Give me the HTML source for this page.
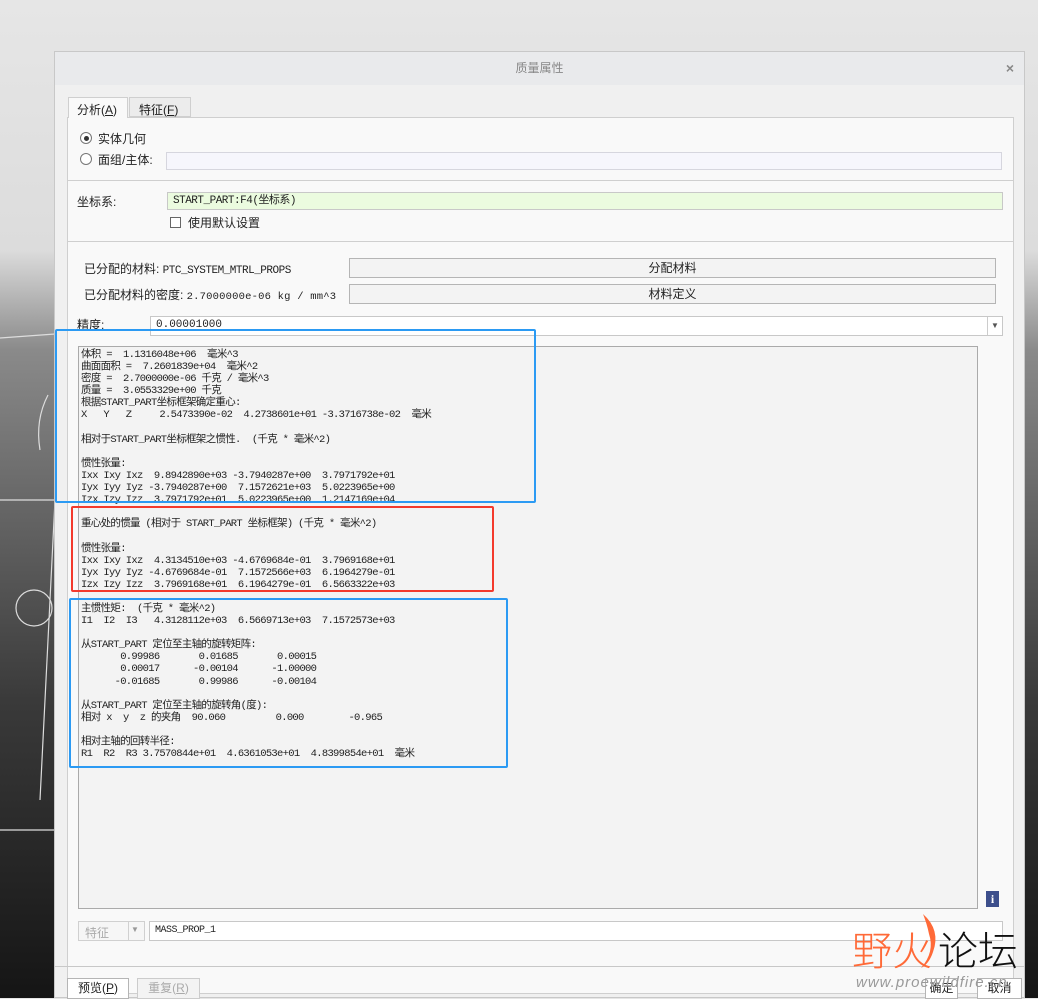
<!DOCTYPE html>
<html><head><meta charset="utf-8">
<style>
*{margin:0;padding:0;box-sizing:border-box}
body{width:1038px;height:998px;overflow:hidden;position:relative;font-family:"Liberation Sans","Noto Sans CJK SC",sans-serif;font-size:12px;color:#222;
background:linear-gradient(#e6e6e6 0,#dcdcdc 250px,#8a8a8a 350px,#3a3a3a 700px,#151515 998px)}
.a{position:absolute}
.dlg{left:54px;top:51px;width:971px;height:947px;background:#f0f0f0;border:1px solid #c8c8c8}
.title{left:0;top:0;width:969px;height:33px;background:#e9eaec;text-align:center;line-height:32px;color:#888;font-size:12px}
.panel{background:#f9f9f9;border:1px solid #cfcfcf}
.inp{background:#fff;border:1px solid #c8c8c8;height:18px;line-height:16px;padding-left:5px;font-size:11px}
.btn{background:#f3f3f3;border:1px solid #b5b5b5;text-align:center;height:20px;line-height:18px;font-size:12px}
.mono{font-family:"Liberation Mono","Noto Sans CJK SC",monospace;font-size:10.5px;letter-spacing:-0.7px;line-height:12.1px;white-space:pre;color:#222}
.radio{width:12px;height:12px;border:1px solid #777;border-radius:50%;background:#fff}
.box{border:2.5px solid #2b9af3;border-radius:2px}
</style></head><body>
<svg class="a" style="left:0;top:330px" width="60" height="520"><g stroke="#ddd" fill="none" stroke-width="1.2"><path d="M0 8 L55 4 M0 170 L55 170 M55 170 L40 470 M0 500 L55 500 M55 4 L55 170"/><circle cx="34" cy="278" r="18"/><path d="M48 65 Q35 90 40 120"/></g></svg>
<div class="a dlg">
 <div class="a title">质量属性</div>
 <div class="a" style="right:10px;top:8px;color:#888;font-size:14px;font-weight:bold">×</div>
 <div class="a" style="left:13px;top:45px;width:60px;height:21px;background:#f9f9f9;border:1px solid #cfcfcf;border-bottom:none;z-index:2;padding:3px 0 0 8px">分析(<u>A</u>)</div>
 <div class="a" style="left:74px;top:45px;width:62px;height:20px;background:#ececec;border:1px solid #cfcfcf;padding:3px 0 0 9px">特征(<u>F</u>)</div>
 <div class="a panel" style="left:12px;top:65px;width:947px;height:877px"></div>
 <div class="a" style="left:13px;top:128px;width:945px;height:1px;background:#cfcfcf"></div>
 <div class="a" style="left:13px;top:189px;width:945px;height:1px;background:#cfcfcf"></div>
 <div class="a radio" style="left:25px;top:80px"><div class="a" style="left:2.5px;top:2.5px;width:5px;height:5px;border-radius:50%;background:#333"></div></div>
 <div class="a" style="left:43px;top:78px">实体几何</div>
 <div class="a radio" style="left:25px;top:101px"></div>
 <div class="a" style="left:43px;top:99px">面组/主体:</div>
 <div class="a" style="left:111px;top:100px;width:836px;height:18px;background:#f6f6fc;border:1px solid #d6d6de"></div>
 <div class="a" style="left:22px;top:141px">坐标系:</div>
 <div class="a inp" style="left:112px;top:140px;width:836px;height:18px;background:#ebfbdf;font-family:'Liberation Mono','Noto Sans CJK SC',monospace;letter-spacing:-0.5px">START_PART:F4(坐标系)</div>
 <div class="a" style="left:115px;top:165px;width:11px;height:11px;border:1px solid #666;background:#fff"></div>
 <div class="a" style="left:133px;top:162px">使用默认设置</div>
 <div class="a" style="left:29px;top:208px;font-size:12px">已分配的材料: <span class="mono" style="font-size:11px;letter-spacing:-0.5px">PTC_SYSTEM_MTRL_PROPS</span></div>
 <div class="a btn" style="left:294px;top:206px;width:647px">分配材料</div>
 <div class="a" style="left:29px;top:234px;font-size:12px">已分配材料的密度: <span class="mono" style="font-size:10.5px;letter-spacing:0.2px">2.7000000e-06 kg / mm^3</span></div>
 <div class="a btn" style="left:294px;top:232px;width:647px">材料定义</div>
 <div class="a" style="left:22px;top:264px">精度:</div>
 <div class="a inp" style="left:95px;top:264px;width:853px;height:20px;font-family:'Liberation Mono',monospace">0.00001000</div>
 <div class="a" style="left:932px;top:265px;width:15px;height:18px;border-left:1px solid #ccc;text-align:center;font-size:8px;line-height:18px;color:#555">▼</div>
 <div class="a" style="left:23px;top:294px;width:900px;height:563px;background:#f3f3f3;border:1px solid #aaa"></div>
 <div class="a mono" style="left:26px;top:297px">体积 =  1.1316048e+06  毫米^3
曲面面积 =  7.2601839e+04  毫米^2
密度 =  2.7000000e-06 千克 / 毫米^3
质量 =  3.0553329e+00 千克
根据START_PART坐标框架确定重心:
X   Y   Z     2.5473390e-02  4.2738601e+01 -3.3716738e-02  毫米

相对于START_PART坐标框架之惯性.  (千克 * 毫米^2)

惯性张量:
Ixx Ixy Ixz  9.8942890e+03 -3.7940287e+00  3.7971792e+01
Iyx Iyy Iyz -3.7940287e+00  7.1572621e+03  5.0223965e+00
Izx Izy Izz  3.7971792e+01  5.0223965e+00  1.2147169e+04

重心处的惯量 (相对于 START_PART 坐标框架) (千克 * 毫米^2)

惯性张量:
Ixx Ixy Ixz  4.3134510e+03 -4.6769684e-01  3.7969168e+01
Iyx Iyy Iyz -4.6769684e-01  7.1572566e+03  6.1964279e-01
Izx Izy Izz  3.7969168e+01  6.1964279e-01  6.5663322e+03

主惯性矩:  (千克 * 毫米^2)
I1  I2  I3   4.3128112e+03  6.5669713e+03  7.1572573e+03

从START_PART 定位至主轴的旋转矩阵:
       0.99986       0.01685       0.00015
       0.00017      -0.00104      -1.00000
      -0.01685       0.99986      -0.00104

从START_PART 定位至主轴的旋转角(度):
相对 x  y  z 的夹角  90.060         0.000        -0.965

相对主轴的回转半径:
R1  R2  R3 3.7570844e+01  4.6361053e+01  4.8399854e+01  毫米</div>
 <div class="a" style="left:931px;top:839px;width:13px;height:16px;background:#3d4f8c;color:#fff;font-weight:bold;text-align:center;font-size:12px;line-height:16px;font-family:'Liberation Serif',serif">i</div>
 <div class="a" style="left:23px;top:869px;width:67px;height:20px;background:#f6f6f6;border:1px solid #d0d0d0;color:#aaa;padding:2px 0 0 6px">特征</div>
 <div class="a" style="left:73px;top:870px;width:1px;height:18px;background:#d0d0d0"></div>
 <div class="a" style="left:76px;top:873px;font-size:8px;color:#999">▼</div>
 <div class="a inp" style="left:94px;top:869px;width:854px;height:20px;font-family:'Liberation Mono',monospace;font-size:10px;letter-spacing:-0.5px;line-height:18px">MASS_PROP_1</div>
 <div class="a" style="left:0;top:914px;width:969px;height:1px;background:#c8c8c8"></div>
 <div class="a btn" style="left:12px;top:926px;width:62px;height:21px;background:#fff">预览(<u>P</u>)</div>
 <div class="a btn" style="left:82px;top:926px;width:63px;height:21px;color:#aaa;border-color:#ccc">重复(<u>R</u>)</div>
 <div class="a btn" style="left:870px;top:926px;width:33px;height:21px;background:#fff">确定</div>
 <div class="a btn" style="left:922px;top:926px;width:45px;height:21px;background:#fff">取消</div>
</div>
<div class="a box" style="left:55px;top:329px;width:481px;height:174px"></div>
<div class="a box" style="left:71px;top:506px;width:423px;height:86px;border-color:#f33a2d"></div>
<div class="a box" style="left:69px;top:598px;width:439px;height:170px"></div>
<div class="a" style="left:852px;top:924px;font-size:40px;line-height:48px;font-family:'Noto Sans CJK SC',sans-serif;font-weight:300;white-space:nowrap"><span style="color:#ff6a38">野火</span><span style="color:#111;margin-left:6px">论坛</span></div>
<svg class="a" style="left:915px;top:912px" width="30" height="60"><path d="M8 2 Q26 18 18 40 Q14 52 6 56 Q20 40 14 22 Q12 12 8 2Z" fill="#ff6a38"/></svg>
<div class="a" style="left:856px;top:974px;font-size:15px;font-style:italic;color:#9a9a9a;letter-spacing:1px">www.proewildfire.cn</div>
</body></html>
